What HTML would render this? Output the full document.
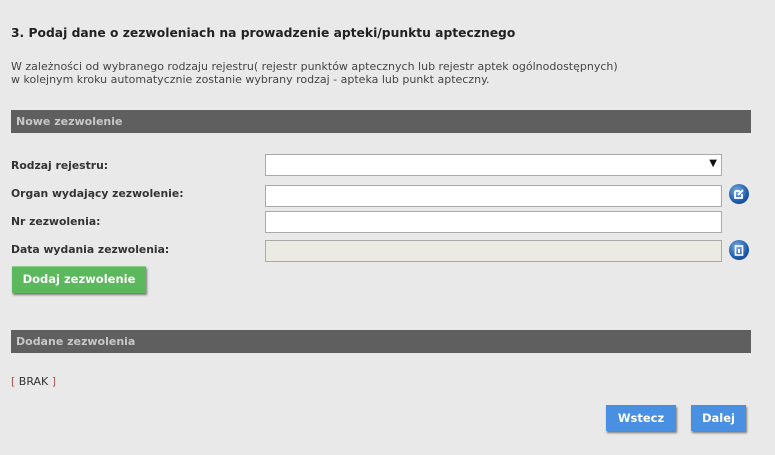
<!DOCTYPE html>
<html><head><meta charset="utf-8"><style>
body{margin:0;width:775px;height:455px;background:#e9e9e9;font-family:"DejaVu Sans",Verdana,sans-serif;color:#333;position:relative;overflow:hidden}
.a{position:absolute;white-space:nowrap}
h1{position:absolute;left:11px;top:26px;margin:0;font-size:12.3px;font-weight:bold;color:#222}
.p{left:11px;font-size:11px;color:#444}
.bar{position:absolute;left:11px;width:740px;height:23px;background:#5f5f5f;color:#c8c8c8;font-weight:bold;font-size:11px;line-height:24px;text-indent:5px}
.lbl{left:11px;font-size:10.8px;font-weight:bold;color:#333}
.in{position:absolute;left:265px;width:455px;height:20px;background:#fff;border:1px solid #aaa}
.ic{position:absolute;left:729px;width:20px;height:20px;border-radius:50%;background:radial-gradient(circle at 40% 35%,#7fb0e8,#1d5aa8 60%,#0d3a7a)}
.btn{position:absolute;color:#fff;font-weight:bold;font-size:11.5px;text-align:center;box-shadow:1px 2px 2px #777}
</style></head><body>
<h1>3. Podaj dane o zezwoleniach na prowadzenie apteki/punktu aptecznego</h1>
<div class="a p" style="top:60px">W zależności od wybranego rodzaju rejestru( rejestr punktów aptecznych lub rejestr aptek ogólnodostępnych)</div>
<div class="a p" style="top:73px">w kolejnym kroku automatycznie zostanie wybrany rodzaj - apteka lub punkt apteczny.</div>
<div class="bar" style="top:110px">Nowe zezwolenie</div>
<div class="a lbl" style="top:159px">Rodzaj rejestru:</div>
<div class="a lbl" style="top:187px">Organ wydający zezwolenie:</div>
<div class="a lbl" style="top:215px">Nr zezwolenia:</div>
<div class="a lbl" style="top:243px">Data wydania zezwolenia:</div>
<div class="in" style="top:154px"><span style="position:absolute;right:4px;top:3px;font-size:10px;color:#111">▼</span></div>
<div class="in" style="top:185px"></div>
<div class="in" style="top:211px"></div>
<div class="in" style="top:240px;background:#ebebe4"></div>
<div class="ic" style="top:184px"><svg width="20" height="20"><path d="M6 7h5M6 7v7h7v-4" stroke="#fff" stroke-width="1.8" fill="none"/><path d="M9 11l5-5" stroke="#fff" stroke-width="2"/></svg></div>
<div class="ic" style="top:240px"><svg width="20" height="20"><rect x="6.5" y="6" width="7" height="9" stroke="#fff" stroke-width="1.6" fill="none"/><rect x="9" y="9" width="2" height="4" fill="#fff"/></svg></div>
<div class="btn" style="left:12px;top:266px;width:134px;height:26px;line-height:25px;background:#5cb85c;border-top:1px solid #8ad08a">Dodaj zezwolenie</div>
<div class="bar" style="top:330px">Dodane zezwolenia</div>
<div class="a" style="left:11px;top:375px;font-size:11px;color:#333"><span style="color:#a55">[</span> BRAK <span style="color:#a55">]</span></div>
<div class="btn" style="left:606px;top:405px;width:70px;height:26px;line-height:26px;background:#4a90e2">Wstecz</div>
<div class="btn" style="left:691px;top:405px;width:55px;height:26px;line-height:26px;background:#4a90e2">Dalej</div>
</body></html>
